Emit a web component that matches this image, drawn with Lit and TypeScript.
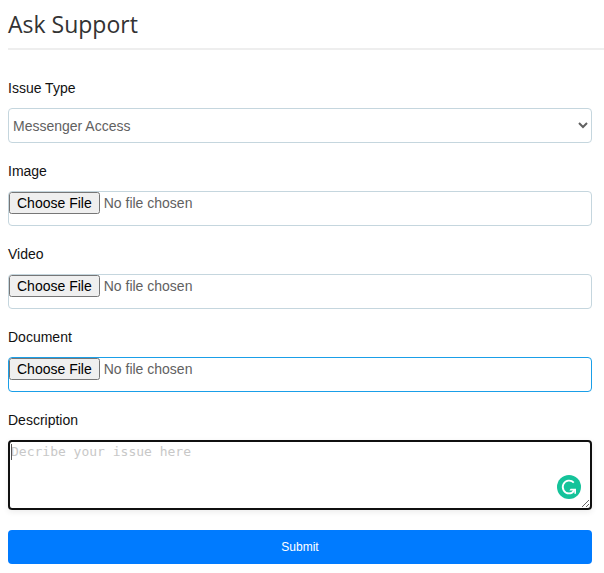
import { LitElement, html, css } from "lit";
import { customElement } from "lit/decorators.js";

const uploads = [
  { id: "image", label: "Image", active: false },
  { id: "video", label: "Video", active: false },
  { id: "document", label: "Document", active: true },
];

@customElement("app-root")
export class AppRoot extends LitElement {
  static styles = css`
    :host {
      display: block;
      color: #212529;
      background: #fff;
      font: 14px/20px "Liberation Sans", Arial, sans-serif;
    }
    * {
      box-sizing: border-box;
    }
    .page {
      padding: 0 0 9px 8px;
    }
    .title {
      margin: 0 0 28px;
      padding: 8px 0;
      border-bottom: 2px solid #eee;
      color: #333;
      font: 400 23px/32px "Open Sans", "Segoe UI", sans-serif;
    }
    .form {
      display: flex;
      flex-direction: column;
      gap: 18px;
      margin: 0 12px 0 0;
    }
    .field {
      display: flex;
      flex-direction: column;
      gap: 10px;
    }
    .label {
      color: #111;
    }
    .control {
      display: block;
      width: 100%;
      height: 35px;
      margin: 0;
      padding: 0;
      border: 1px solid #c5d6de;
      border-radius: 4px;
      background: #fff;
      color: #616161;
      font: 14px/20px "Liberation Sans", Arial, sans-serif;
    }
    .active {
      border-color: #1a9fe8;
    }
    .file::file-selector-button {
      height: 22px;
      font: 14px/16px "Liberation Sans", Arial, sans-serif;
    }
    .area {
      position: relative;
    }
    .text {
      display: block;
      width: 100%;
      height: 70px;
      margin: 0;
      padding: 1px;
      border: 2px solid #101010;
      border-radius: 4px;
      outline: none;
      background: #fff;
      box-shadow: 0 2px 6px rgba(0, 0, 0, 0.08);
      color: #616161;
      font: 13px/18px "DejaVu Sans Mono", monospace;
      resize: both;
    }
    .text::placeholder {
      color: #c8c8c8;
    }
    .caret {
      position: absolute;
      left: 3px;
      top: 4px;
      width: 1px;
      height: 16px;
      background: #555;
    }
    .badge {
      position: absolute;
      right: 11px;
      bottom: 11px;
      width: 24px;
      height: 24px;
    }
    .submit {
      height: 34px;
      margin-top: 2px;
      padding: 0;
      border: 0;
      border-radius: 4px;
      background: #007bff;
      color: #fff;
      font: 12px/18px "Liberation Sans", Arial, sans-serif;
    }
  `;

  render() {
    return html`
      <main class="page">
        <h1 class="title">Ask Support</h1>
        <form class="form" @submit=${(e: Event) => e.preventDefault()}>
          <div class="field">
            <label class="label" for="type">Issue Type</label>
            <select class="control" id="type">
              <option>Messenger Access</option>
            </select>
          </div>
          ${uploads.map(
            (u) => html`
              <div class="field">
                <label class="label" for=${u.id}>${u.label}</label>
                <input class="control file ${u.active ? "active" : ""}" type="file" id=${u.id} />
              </div>
            `
          )}
          <div class="field">
            <label class="label" for="description">Description</label>
            <div class="area">
              <textarea class="text" id="description" placeholder="Decribe your issue here"></textarea>
              <span class="caret"></span>
              <svg class="badge" viewBox="0 0 24 24" aria-hidden="true">
                <circle cx="12" cy="12" r="12" fill="#15c39a" />
                <path
                  d="M16.8 7.6A6.4 6.4 0 1 0 12 18.4C14.2 18.4 16.2 17.2 17.4 15"
                  fill="none"
                  stroke="#fff"
                  stroke-width="1.8"
                />
                <path d="M13.6 13.8H19V18.8H17.4V15.4H12.4Z" fill="#fff" />
              </svg>
            </div>
          </div>
          <button class="submit" type="submit">Submit</button>
        </form>
      </main>
    `;
  }
}
